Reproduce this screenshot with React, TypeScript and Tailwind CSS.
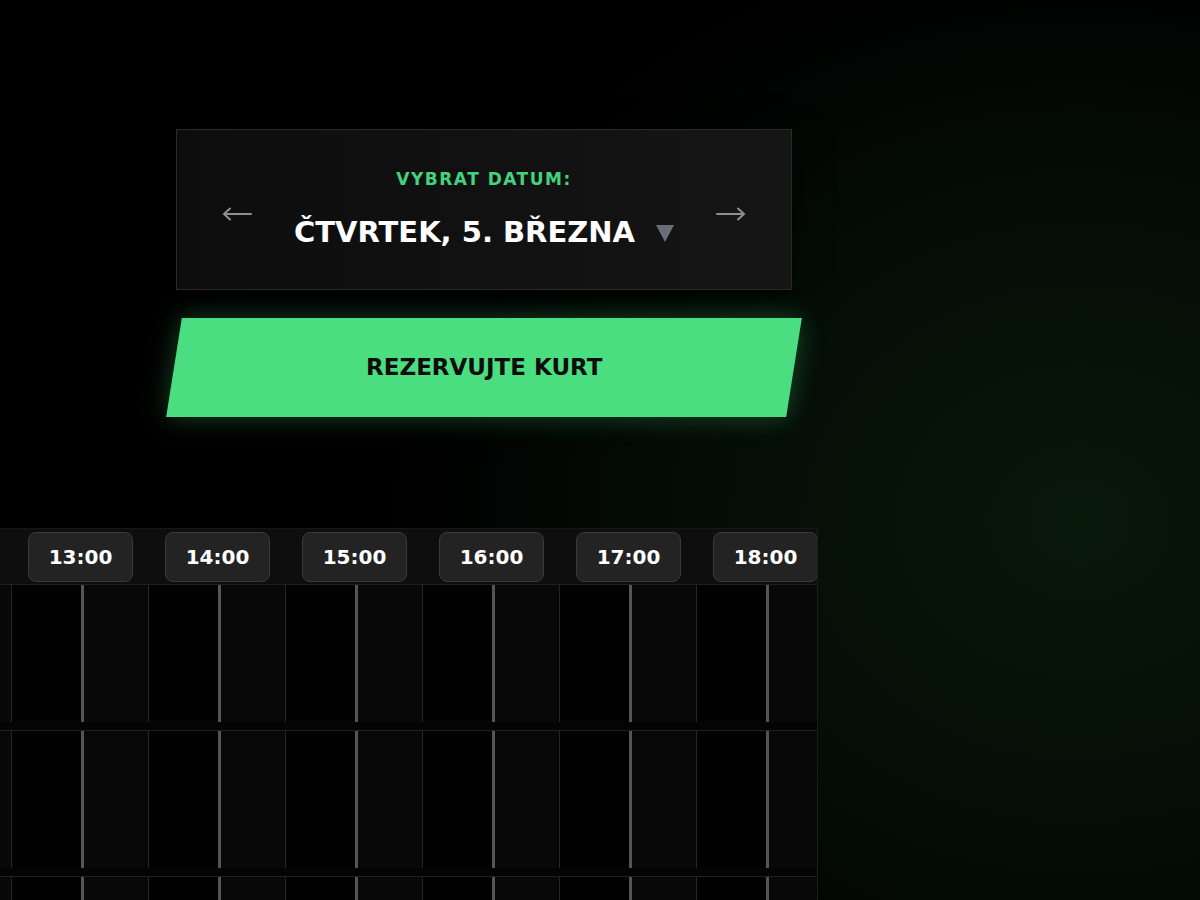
import React from "react";

const hours = ["13:00", "14:00", "15:00", "16:00", "17:00", "18:00"];
const columns = ["12", "13", "14", "15", "16", "17", "18"];
const rows = [0, 1, 2];

function ArrowLeftIcon() {
  return (
    <svg width="30" height="16" viewBox="0 0 30 16" fill="none" stroke="#8e8e93" strokeWidth="2" strokeLinecap="round">
      <path d="M2 8 H29 M8 2.5 L2 8 L8 13.5" />
    </svg>
  );
}

function ArrowRightIcon() {
  return (
    <svg width="30" height="16" viewBox="0 0 30 16" fill="none" stroke="#8e8e93" strokeWidth="2" strokeLinecap="round">
      <path d="M1 8 H28 M22 2.5 L28 8 L22 13.5" />
    </svg>
  );
}

export default function App() {
  return (
    <main
      className="min-h-[900px] w-full overflow-hidden bg-black bg-[radial-gradient(ellipse_70%_80%_at_90%_58%,#081809_0%,#040b06_50%,#000_82%)]"
      style={{ fontFamily: '"DejaVu Sans", "Liberation Sans", sans-serif' }}
    >
      <div className="flex h-[900px] flex-col">
        <section className="ml-[176px] mt-[129px] w-[616px]">
          <div className="flex h-[161px] flex-col items-center border border-[#2a2a2a] bg-[linear-gradient(90deg,#0d0d0d,#151515)] pt-[40px] shadow-[0_10px_30px_rgba(0,0,0,0.6)]">
            <p className="text-[17px] font-bold leading-[19px] tracking-[1.5px] text-[#45d27c]">VYBRAT DATUM:</p>
            <div className="mt-[26px] flex w-full items-start justify-between px-[45px]">
              <button className="mt-[-9px]">
                <ArrowLeftIcon />
              </button>
              <div className="flex items-center gap-[21px]">
                <h1 className="text-[29px] font-bold leading-[34px] text-white">ČTVRTEK, 5. BŘEZNA</h1>
                <svg width="18" height="17" viewBox="0 0 18 17" className="mt-[2px]">
                  <polygon points="0,0 18,0 9,17" fill="#6c6c78" />
                </svg>
              </div>
              <button className="mt-[-9px]">
                <ArrowRightIcon />
              </button>
            </div>
          </div>

          <button className="-ml-[2px] mt-[28px] flex h-[99px] w-[620px] -skew-x-[9deg] items-center justify-center bg-[#4ade80] shadow-[0_0_26px_rgba(74,222,128,0.3)]">
            <span className="skew-x-[9deg] text-[23px] font-bold text-[#0d0d0d]">REZERVUJTE KURT</span>
          </button>
        </section>

        <section className="-ml-[56px] mt-[111px] w-[874px] overflow-hidden border-r border-[#1c1c1c]">
          <div className="flex h-[57px] items-center gap-[32px] border-b border-[#1f1f1f] border-t border-t-[#161616] bg-[#0e0e0e] pl-[84px]">
            {hours.map((hour) => (
              <div
                key={hour}
                className="flex h-[50px] w-[105px] shrink-0 items-center justify-center rounded-lg border border-[#3a3a3a] bg-[#232323] text-[20px] font-bold text-white"
              >
                {hour}
              </div>
            ))}
          </div>

          {rows.map((row) => (
            <div key={row} className="flex h-[146px] border-b border-[#202020] bg-[#040404] pb-[8px]">
              {columns.map((col) => (
                <div key={col} className="flex h-[137px] w-[137px] shrink-0">
                  <div className="w-[3px] bg-[#555]" />
                  <div className="w-[64px] bg-[#080808]" />
                  <div className="w-[1px] bg-[#262626]" />
                  <div className="w-[69px] bg-[#020202]" />
                </div>
              ))}
            </div>
          ))}
        </section>
      </div>
    </main>
  );
}
